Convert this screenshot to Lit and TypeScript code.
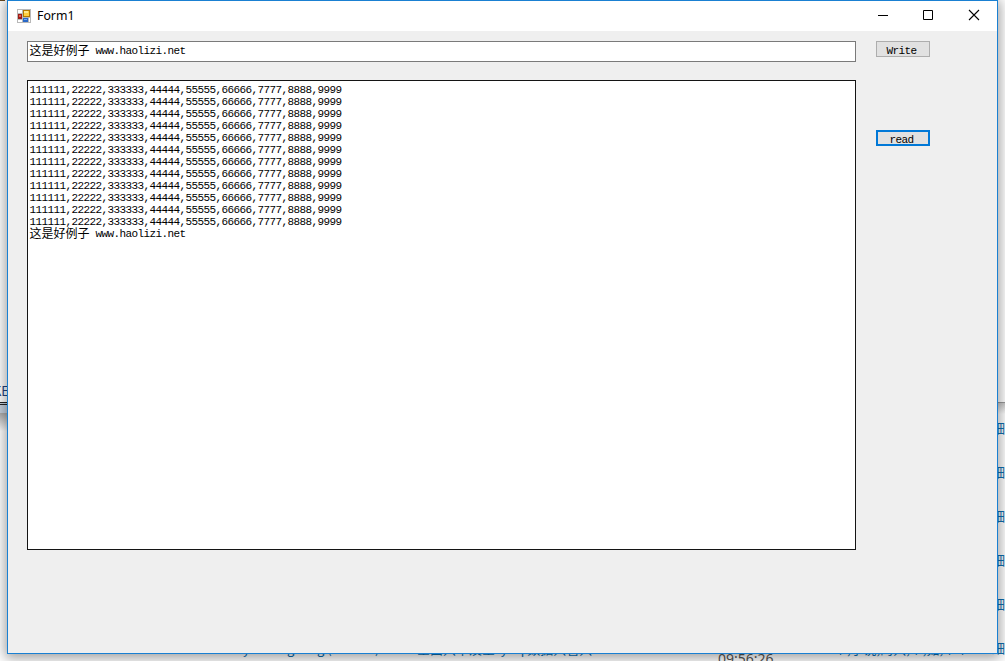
import { LitElement, html, css } from "lit";
import { customElement, property } from "lit/decorators.js";

const ROWS = Array.from({ length: 12 }, () => "111111,22222,333333,44444,55555,66666,7777,8888,9999");

@customElement("mono-line")
class MonoLine extends LitElement {
  @property() cjk = "";
  @property() latin = "";
  static styles = css`
    :host { display: flex; height: 12px; line-height: 12px; white-space: pre; color: #000; }
    .cjk { font: 12px/10px "Noto Sans CJK SC", sans-serif; height: 12px; }
    .latin { font: 11px/12px "Liberation Mono", monospace; letter-spacing: -0.6px; }
  `;
  render() {
    return html`${this.cjk ? html`<span class="cjk">${this.cjk}</span>` : ""}<span class="latin">${this.latin}</span>`;
  }
}

@customElement("app-root")
class AppRoot extends LitElement {
  static styles = css`
    :host { display: block; width: 1005px; height: 661px; overflow: hidden; position: relative; background: #fff; }
    * { box-sizing: border-box; }
    .back { position: absolute; inset: 0; overflow: hidden; font: 13px/16px "Noto Sans CJK SC", sans-serif; color: #0f6fb0; }
    .back > * { position: absolute; white-space: pre; }
    .speck { left: 0; top: 0; width: 5px; height: 1px; background: #6a4a20; }
    .ke { right: 996px; top: 383px; color: #24417c; }
    .bar { left: 0; top: 402px; width: 8px; height: 11px; background: #c5d0dd; border-top: 3px double #222; }
    .edge { left: 0; top: 413px; width: 8px; height: 18px; background: linear-gradient(#aaa, #fff); }
    .redge { left: 997px; top: 402px; width: 8px; height: 12px; background: linear-gradient(#999 0 1px, #c8c8c8 1px, #fff); }
    .cell { left: 992px; }
    .foot { top: 640px; height: 18px; line-height: 18px; }
    .time { left: 718px; top: 651px; color: #555; font: 14px/16px "Noto Sans", sans-serif; }
    .frame { height: 661px; padding: 0 7px 7px; }
    .window { position: relative; width: 991px; height: 654px; border: 1px solid #1a80d2; background: #efefef; box-shadow: 0 2px 12px 2px rgba(0,0,0,.38); display: flex; flex-direction: column; }
    .title { height: 30px; flex: none; background: #fff; display: flex; align-items: center; padding-left: 9px; font: 12.300px/30px "Noto Sans", sans-serif; color: #000; }
    .title svg { display: block; flex: none; }
    .name { flex: 1; padding-left: 6px; }
    .controls { display: flex; margin-right: -1px; }
    .control { width: 46px; height: 30px; }
    .body { display: flex; padding: 10px 0 0 19px; gap: 20px; }
    .fields { width: 829px; display: flex; flex-direction: column; gap: 18px; }
    .input { height: 21px; border: 1px solid #7a7a7a; background: #fff; padding: 3px 1.5px; }
    .text { height: 470px; border: 1px solid #141414; background: #fff; padding: 3px 1.5px; }
    .buttons { display: flex; flex-direction: column; gap: 73px; }
    button { display: flex; justify-content: center; width: 54px; height: 16px; margin: 0; padding: 3px 3px 0 0; border: 1px solid #adadad; border-radius: 0; background: #e1e1e1; }
    button.focus { border: 2px solid #0078d7; padding-top: 2px; }
  `;
  render() {
    return html`
      <div class="back">
        <span class="speck"></span>
        <span class="ke">KE</span><span class="bar"></span><span class="edge"></span><span class="redge"></span>
        ${[420, 464, 508, 552, 596, 640].map((y) => html`<span class="cell" style="top:${y}px">细</span>`)}
        <span class="foot" style="left:243px">y</span>
        <span class="foot" style="left:287px">g</span>
        <span class="foot" style="left:317px">g (</span>
        <span class="foot" style="left:375px">)</span>
        <span class="foot" style="left:417px">空面只不及空  y   q 数据只管只</span>
        <span class="time">09:56:26</span>
        <span class="foot" style="left:834px">个,小说,的只,个,如,个个</span>
      </div>
      <div class="frame"><div class="window">
        <div class="title">
          <svg width="14" height="14" viewBox="0 0 14 14" shape-rendering="crispEdges">
            <path fill="#b8b8b8" d="M0 0h14v14H0z"/><path fill="#fff" d="M1 1h4v3H1zM1 11h4v2H1zM12 9h1v4h-1z"/>
            <path fill="#9b1c16" d="M1 5h4v5H1z"/><path fill="#e45b50" d="M2 6h2v2H2z"/>
            <path fill="#b47a00" d="M6 1h7v7H6z"/><path fill="#ffcf3f" d="M7 2h5v5H7z"/><path fill="#ffe88c" d="M7 2h4v2H7z"/>
            <path fill="#2868c8" d="M6 9h5v4H6z"/><path fill="#74a9f4" d="M7 10h3v1H7z"/>
          </svg>
          <span class="name">Form1</span>
          <div class="controls">
            <svg class="control" viewBox="0 0 46 30"><path d="M18 14.500h10" stroke="#000"/></svg>
            <svg class="control" viewBox="0 0 46 30"><path d="M17.500 9.500h9v9h-9z" fill="none" stroke="#000"/></svg>
            <svg class="control" viewBox="0 0 46 30"><path d="M17 9l10 10M27 9l-10 10" stroke="#000" stroke-width="1.1"/></svg>
          </div>
        </div>
        <div class="body">
          <div class="fields">
            <div class="input"><mono-line cjk="这是好例子" latin=" www.haolizi.net"></mono-line></div>
            <div class="text">
              ${ROWS.map((r) => html`<mono-line latin=${r}></mono-line>`)}
              <mono-line cjk="这是好例子" latin=" www.haolizi.net"></mono-line>
            </div>
          </div>
          <div class="buttons">
            <button><mono-line latin="Write"></mono-line></button>
            <button class="focus"><mono-line latin="read"></mono-line></button>
          </div>
        </div>
      </div></div>`;
  }
}
